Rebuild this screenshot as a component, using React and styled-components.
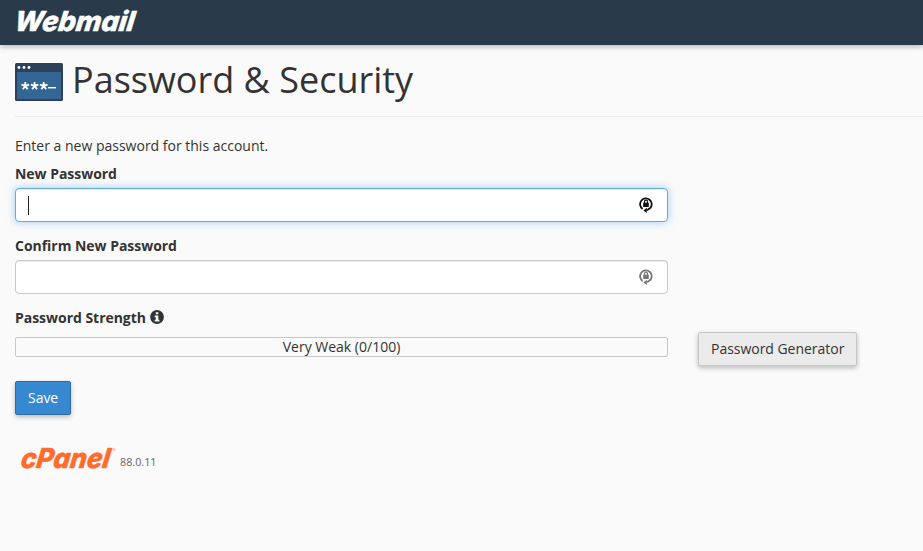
import React from "react";
import styled, { createGlobalStyle } from "styled-components";

const GlobalStyle = createGlobalStyle`
  *, *::before, *::after { box-sizing: border-box; }
  html, body { margin: 0; min-height: 100%; background: #fafafa; overflow: hidden; }
  body {
    color: #333;
    font-family: "Open Sans", sans-serif;
    font-size: 14px;
    line-height: 20px;
  }
`;

const Header = styled.header`
  height: 45px;
  padding: 7px 14px 0;
  background: #293a4a;
  box-shadow: 0 2px 5px rgba(0, 0, 0, 0.26);
`;

const Wordmark = styled.svg`
  display: block;
  overflow: visible;
  flex: none;
`;

const WordmarkText = styled.text`
  font-family: "Inter", sans-serif;
  font-style: italic;
  font-weight: 800;
  stroke-width: 0.5px;
`;

const Main = styled.main`
  padding-left: 15px;
`;

const TitleBar = styled.div`
  display: flex;
  height: 72px;
  padding-top: 18px;
  border-bottom: 1px solid #eaeaea;
`;

const Title = styled.h1`
  margin: -3px 0 0 9px;
  font-size: 36px;
  font-weight: 400;
  line-height: 40px;
  white-space: nowrap;
`;

const Intro = styled.p`
  margin: 19px 0 8px;
`;

const Form = styled.form`
  width: 653px;
`;

const Field = styled.div`
  margin-bottom: 14px;
`;

const Label = styled.label`
  display: flex;
  align-items: center;
  gap: 4px;
  height: 20px;
  margin-bottom: 4px;
  font-weight: 700;
  letter-spacing: -0.03px;

  svg {
    margin-bottom: 2px;
  }
`;

const InputBox = styled.div`
  display: flex;
  align-items: center;
  justify-content: space-between;
  height: 34px;
  padding: 0 14px 0 12px;
  background: #fff;
  border: 1px solid ${(p) => (p.$focused ? "#66a9dc" : "#c8c8c8")};
  border-radius: 4px;
  box-shadow: ${(p) =>
    p.$focused
      ? "inset 0 1px 1px rgba(0,0,0,.075), 0 0 8px rgba(102,175,233,.6)"
      : "inset 0 1px 1px rgba(0,0,0,.075)"};
`;

const Caret = styled.span`
  width: 1px;
  height: 19px;
  background: ${(p) => (p.$visible ? "#222" : "transparent")};
`;

const StrengthRow = styled.div`
  display: flex;
  align-items: flex-start;
  width: 843px;
  height: 49px;
`;

const StrengthBar = styled.div`
  flex: none;
  width: 653px;
  height: 20px;
  margin: 5px 30px 0 0;
  border: 1px solid #c8c8c8;
  border-radius: 2px;
  line-height: 18px;
  text-align: center;
`;

const Button = styled.button`
  flex: none;
  height: 34px;
  padding: 0 12px;
  border: 1px solid ${(p) => (p.$primary ? "#2b6ca3" : "#c6c6c6")};
  border-radius: 2px;
  background: ${(p) => (p.$primary ? "#3689d1" : "#ebebeb")};
  color: ${(p) => (p.$primary ? "#fff" : "#333")};
  font: inherit;
  letter-spacing: -0.03px;
  white-space: nowrap;
  box-shadow: 0 2px 5px rgba(0, 0, 0, 0.26);
`;

const Footer = styled.footer`
  display: flex;
  align-items: flex-start;
  margin: 30px 0 0 5px;
`;

const Version = styled.span`
  margin: 7px 0 0 4px;
  color: #666;
  font-size: 10.8px;
  line-height: 20px;
`;

function PasswordIcon() {
  return (
    <svg width="48" height="38" viewBox="0 0 48 38">
      <rect width="48" height="38" rx="1.5" fill="#2d415a" />
      <rect x="2" y="9" width="44" height="27" fill="#336694" />
      <g fill="#fff">
        <circle cx="4" cy="4.5" r="1.4" />
        <circle cx="9" cy="4.5" r="1.4" />
        <circle cx="14" cy="4.5" r="1.4" />
        <rect x="33" y="24" width="8" height="1.4" />
      </g>
      <g stroke="#fff" strokeWidth="1.8">
        {[10.3, 19.6, 28.7].map((x) => (
          <path
            key={x}
            transform={`translate(${x} 22.9)`}
            d="M0 0V-4M0 0L3.8-1.2M0 0L2.4 3.3M0 0L-2.4 3.3M0 0L-3.8-1.2"
          />
        ))}
      </g>
    </svg>
  );
}

function LockIcon({ color }) {
  return (
    <svg width="14" height="18" viewBox="0 0 14 18" fill="none">
      <path d="M3.6 13A5.8 5.8 0 1 1 11.2 12.1L8 14.2" stroke={color} strokeWidth="1.8" />
      <path d="M7.8 11.8V17L4.4 14.4Z" fill={color} />
      <path d="M5.5 7.5V5.6a1.5 1.5 0 0 1 3 0V7.5" stroke={color} strokeWidth="1.2" />
      <rect x="4.2" y="6.7" width="5.6" height="4.3" fill={color} />
    </svg>
  );
}

function InfoIcon() {
  return (
    <svg width="14" height="14" viewBox="0 0 14 14">
      <circle cx="7" cy="7" r="6.9" fill="#333" />
      <path d="M5.8 2.3h2.5v2H5.8zM4.7 5.6h3.6v4.2h1.1v1.7H4.7V9.8h1.1V7.3H4.7z" fill="#fafafa" />
    </svg>
  );
}

export default function App() {
  return (
    <>
      <GlobalStyle />
      <Header>
        <Wordmark width="122" height="30">
          <WordmarkText
            transform="translate(-0.5 24) skewX(-8)"
            fontSize="27.5"
            fill="#fff"
            stroke="#fff"
            textLength="120"
            lengthAdjust="spacingAndGlyphs"
          >
            Webmail
          </WordmarkText>
        </Wordmark>
      </Header>
      <Main>
        <TitleBar>
          <PasswordIcon />
          <Title>Password &amp; Security</Title>
        </TitleBar>
        <Intro>Enter a new password for this account.</Intro>
        <Form onSubmit={(e) => e.preventDefault()}>
          <Field>
            <Label>New Password</Label>
            <InputBox $focused>
              <Caret $visible />
              <LockIcon color="#111" />
            </InputBox>
          </Field>
          <Field>
            <Label>Confirm New Password</Label>
            <InputBox>
              <Caret />
              <LockIcon color="#777" />
            </InputBox>
          </Field>
          <Label>
            Password Strength
            <InfoIcon />
          </Label>
          <StrengthRow>
            <StrengthBar>Very Weak (0/100)</StrengthBar>
            <Button type="button">Password Generator</Button>
          </StrengthRow>
          <Button $primary type="submit">Save</Button>
        </Form>
        <Footer>
          <Wordmark width="96" height="26">
            <WordmarkText
              transform="translate(0 23) skewX(-8)"
              fontSize="27.5"
              fill="#ff6c2c"
              stroke="#ff6c2c"
              textLength="89"
              lengthAdjust="spacingAndGlyphs"
            >
              cPanel
            </WordmarkText>
            <circle cx="94" cy="4.5" r="1" fill="none" stroke="#ff6c2c" strokeWidth="0.5" />
          </Wordmark>
          <Version>88.0.11</Version>
        </Footer>
      </Main>
    </>
  );
}
